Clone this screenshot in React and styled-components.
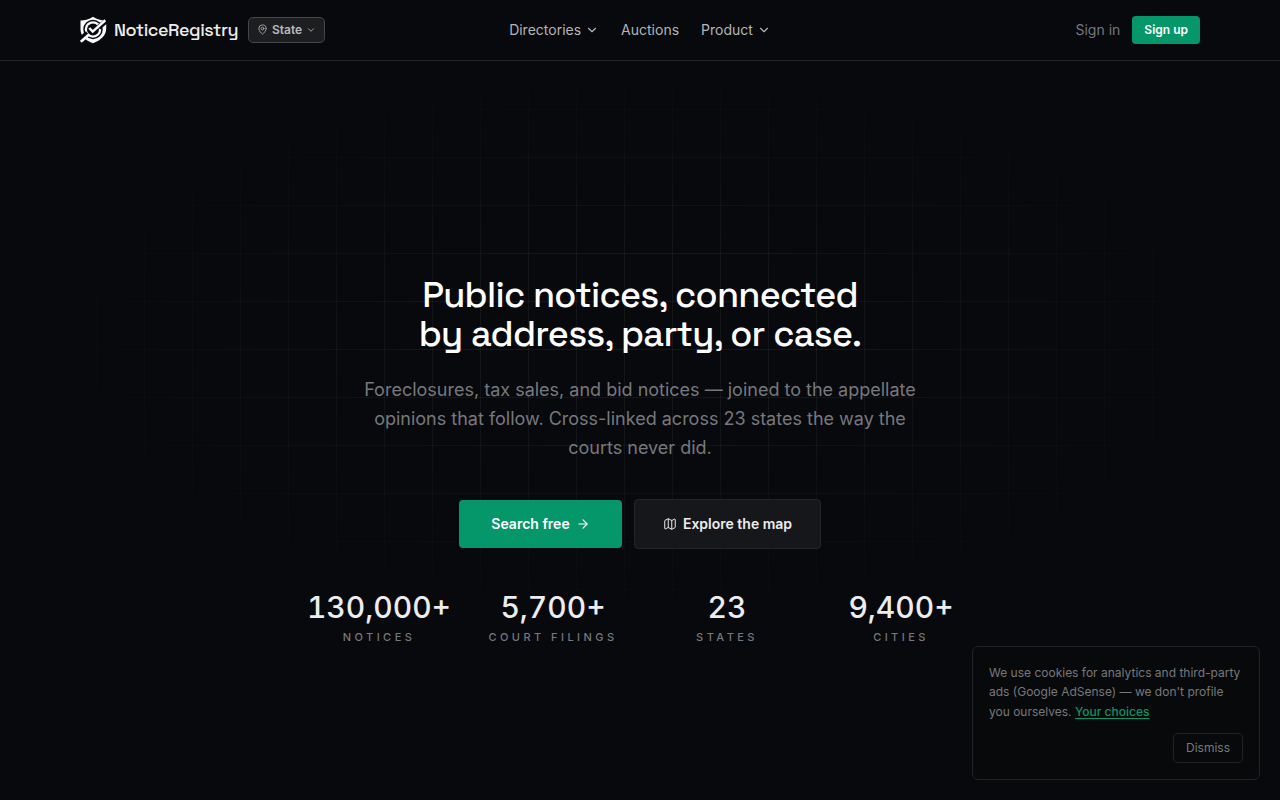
import React, { useState } from 'react';
import styled, { createGlobalStyle } from 'styled-components';
import { ArrowRight, ChevronDown, Map, MapPin } from 'lucide-react';

const GlobalStyle = createGlobalStyle`
  * {
    box-sizing: border-box;
  }

  body {
    margin: 0;
    background-color: #07090c;
    color: #ededef;
    font-family: Inter, sans-serif;
    overflow: hidden;
  }

  button {
    font-family: inherit;
    cursor: pointer;
  }
`;

const Page = styled.div`
  display: flex;
  flex-direction: column;
  height: 100vh;
`;

const Header = styled.header`
  height: 61px;
  flex-shrink: 0;
  border-bottom: 1px solid #232427;
`;

const HeaderInner = styled.div`
  display: grid;
  grid-template-columns: 1fr auto 1fr;
  align-items: center;
  width: 1120px;
  height: 60px;
  margin: 0 auto;
`;

const Brand = styled.div`
  display: flex;
  align-items: center;
`;

const BrandName = styled.span`
  margin-left: 7px;
  width: 134px;
  padding-bottom: 2px;
  font-family: 'Space Grotesk', Inter, sans-serif;
  font-size: 18px;
  font-weight: 500;
  letter-spacing: -0.45px;
  white-space: nowrap;
`;

const StateButton = styled.button`
  display: flex;
  align-items: center;
  justify-content: center;
  width: 77px;
  height: 26px;
  padding: 0 0 1px;
  border: 1px solid #45464a;
  border-radius: 5px;
  background-color: #1d1e20;
  color: #b9babd;
  font-size: 12px;
  font-weight: 600;
  line-height: 16px;

  span {
    margin: 0 4px;
  }
`;

const Nav = styled.nav`
  display: flex;
  align-items: center;
  gap: 22px;
`;

const NavItem = styled.a`
  display: flex;
  align-items: center;
  gap: 4px;
  color: #b4b5b8;
  font-size: 14px;
  line-height: 20px;
  cursor: pointer;
`;

const Account = styled.div`
  display: flex;
  align-items: center;
  justify-content: flex-end;
  gap: 12px;
`;

const SignIn = styled.a`
  padding-bottom: 1px;
  color: #77787c;
  font-size: 14px;
  line-height: 20px;
  cursor: pointer;
`;

const SignUp = styled.button`
  height: 28px;
  padding: 0 12px 1px;
  border: 0;
  border-radius: 4px;
  background-color: #059669;
  color: #ffffff;
  font-size: 12px;
  font-weight: 600;
  line-height: 16px;
`;

const Hero = styled.main`
  position: relative;
  flex: 1;
  display: flex;
  flex-direction: column;
  align-items: center;
  padding-top: 215px;
  text-align: center;

  > * {
    position: relative;
  }

  &::before {
    content: '';
    position: absolute;
    inset: 0;
    background-image:
      linear-gradient(to right, rgba(255, 255, 255, 0.05) 1px, transparent 1px),
      linear-gradient(to bottom, rgba(255, 255, 255, 0.05) 1px, transparent 1px);
    background-size: 48px 48px;
    mask-image: radial-gradient(ellipse 640px 296px at 50% 38%, #000 30%, transparent 100%);
  }
`;

const Title = styled.h1`
  margin: 0;
  font-family: 'Space Grotesk', Inter, sans-serif;
  font-size: 36px;
  font-weight: 500;
  line-height: 39px;
  letter-spacing: -0.72px;
  color: #ffffff;
  white-space: nowrap;
`;

const Lead = styled.p`
  width: 576px;
  margin: 21px 0 0;
  color: #77787d;
  font-size: 18px;
  line-height: 29px;
`;

const Actions = styled.div`
  display: flex;
  align-items: center;
  gap: 12px;
  margin-top: 37px;
`;

const ActionButton = styled.button`
  display: flex;
  align-items: center;
  justify-content: center;
  gap: 6px;
  width: ${({ $primary }) => ($primary ? '163px' : '187px')};
  height: ${({ $primary }) => ($primary ? '48px' : '50px')};
  padding: 0;
  border: ${({ $primary }) => ($primary ? '0' : '1px solid #242528')};
  border-radius: 4px;
  background-color: ${({ $primary }) => ($primary ? '#059669' : '#16171a')};
  color: ${({ $primary }) => ($primary ? '#ffffff' : '#ededef')};
  font-size: 14px;
  font-weight: 600;
  line-height: 20px;
`;

const Stats = styled.div`
  display: grid;
  grid-template-columns: repeat(4, 150px);
  gap: 24px;
  margin-top: 40px;
`;

const StatValue = styled.div`
  font-size: 30px;
  font-weight: 500;
  font-variant-numeric: tabular-nums;
  line-height: 36px;
  color: #ededef;
`;

const StatLabel = styled.div`
  margin-top: 4px;
  color: #77787d;
  font-size: 11px;
  font-weight: 500;
  line-height: 16px;
  letter-spacing: 3.45px;
  text-transform: uppercase;
  white-space: nowrap;
`;

const CookieCard = styled.aside`
  position: fixed;
  right: 20px;
  bottom: 20px;
  display: flex;
  flex-direction: column;
  align-items: flex-end;
  width: 288px;
  padding: 16px;
  border: 1px solid #222326;
  border-radius: 6px;
  background-color: #08090b;
`;

const CookieText = styled.p`
  width: 100%;
  margin: 0;
  color: #77787c;
  font-size: 12px;
  line-height: 19.5px;
  white-space: nowrap;

  a {
    color: #059669;
    font-weight: 500;
    text-decoration: underline;
    text-underline-offset: 2px;
  }
`;

const DismissButton = styled.button`
  width: 70px;
  height: 30px;
  margin-top: 12px;
  padding: 0 0 1px;
  border: 1px solid #222326;
  border-radius: 4px;
  background: transparent;
  color: #77787c;
  font-size: 12px;
  line-height: 16px;
`;

const stats = [
  { value: '130,000+', label: 'Notices' },
  { value: '5,700+', label: 'Court filings' },
  { value: '23', label: 'States' },
  { value: '9,400+', label: 'Cities' },
];

const Logo = () => (
  <svg width="27" height="28" viewBox="0 0 27 28" fill="none">
    <path d="M13 .7C10 3 5 4.500 .5 4.600V13c0 6.800 4.500 11.200 12.500 14.300C21 24.200 26.200 19.500 26.200 12.500V4.600C21 4.500 16 3 13 .7Z" fill="#fafafa" />
    <circle cx="13" cy="13.400" r="9" stroke="#07090c" strokeWidth="1.500" />
    <circle cx="13" cy="13.400" r="6" fill="#07090c" />
    <path d="M-.5 24.500 7.500 17M18.500 11.500 27 4.300" stroke="#07090c" strokeWidth="5" />
    <path d="M.8 25.800 9.300 18.300" stroke="#fafafa" strokeWidth="2.800" />
    <path d="M9.300 12 12.700 15.600 25.300 4.300" stroke="#fafafa" strokeWidth="2.500" />
  </svg>
);

const App = () => {
  const [showCookies, setShowCookies] = useState(true);

  return (
    <Page>
      <GlobalStyle />
      <Header>
        <HeaderInner>
          <Brand>
            <Logo />
            <BrandName>NoticeRegistry</BrandName>
            <StateButton>
              <MapPin size={11} strokeWidth={1.8} />
              <span>State</span>
              <ChevronDown size={10} />
            </StateButton>
          </Brand>
          <Nav>
            <NavItem>
              Directories
              <ChevronDown size={14} />
            </NavItem>
            <NavItem>Auctions</NavItem>
            <NavItem>
              Product
              <ChevronDown size={14} />
            </NavItem>
          </Nav>
          <Account>
            <SignIn>Sign in</SignIn>
            <SignUp>Sign up</SignUp>
          </Account>
        </HeaderInner>
      </Header>
      <Hero>
        <Title>
          Public notices, connected
          <br />
          by address, party, or case.
        </Title>
        <Lead>
          Foreclosures, tax sales, and bid notices — joined to the appellate
          opinions that follow. Cross-linked across 23 states the way the
          courts never did.
        </Lead>
        <Actions>
          <ActionButton $primary>
            Search free
            <ArrowRight size={14} />
          </ActionButton>
          <ActionButton>
            <Map size={14} strokeWidth={1.7} />
            Explore the map
          </ActionButton>
        </Actions>
        <Stats>
          {stats.map(({ value, label }) => (
            <div key={label}>
              <StatValue>{value}</StatValue>
              <StatLabel>{label}</StatLabel>
            </div>
          ))}
        </Stats>
      </Hero>
      {showCookies && (
        <CookieCard>
          <CookieText>
            We use cookies for analytics and third-party
            <br />
            ads (Google AdSense) — we don&apos;t profile
            <br />
            you ourselves. <a>Your choices</a>
          </CookieText>
          <DismissButton onClick={() => setShowCookies(false)}>Dismiss</DismissButton>
        </CookieCard>
      )}
    </Page>
  );
};

export default App;
